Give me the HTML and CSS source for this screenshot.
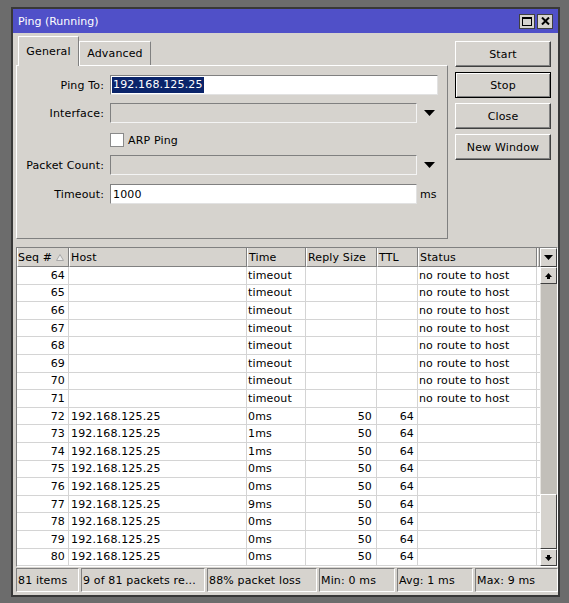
FILE: index.html
```html
<!DOCTYPE html>
<html lang="en">
<head>
<meta charset="UTF-8">
<title>Ping (Running)</title>
<link rel="stylesheet" href="styles.css">
</head>
<body>

<div class="window">
  <div class="titlebar">
    <span class="title">Ping (Running)</span>
    <div class="win-btns">
      <span class="win-btn">
        <svg width="10" height="9" viewBox="0 0 10 9"><rect x="0.5" y="0.5" width="9" height="8" fill="none" stroke="#000"/><rect x="0" y="0" width="10" height="2" fill="#000"/></svg>
      </span>
      <span class="win-btn">
        <svg width="9" height="8" viewBox="0 0 9 8"><path d="M1 0.5 L8 7.5 M8 0.5 L1 7.5" stroke="#000" stroke-width="2"/></svg>
      </span>
    </div>
  </div>

  <div class="window-body">
    <div class="top">
      <div class="tabs">
        <div class="tab-strip">
          <div class="tab active">General</div>
          <div class="tab">Advanced</div>
        </div>
        <div class="tab-panel">
          <div class="frow">
            <span class="flabel">Ping To:</span>
            <div class="field wide"><span class="sel">192.168.125.25</span></div>
          </div>
          <div class="frow">
            <span class="flabel">Interface:</span>
            <div class="field disabled"></div>
            <span class="drop"><svg width="11" height="6" viewBox="0 0 11 6"><path d="M0 0 H11 L5.5 6 Z" fill="#000"/></svg></span>
          </div>
          <div class="frow arp">
            <span class="check"></span>
            <span class="check-label">ARP Ping</span>
          </div>
          <div class="frow count">
            <span class="flabel">Packet Count:</span>
            <div class="field disabled"></div>
            <span class="drop"><svg width="11" height="6" viewBox="0 0 11 6"><path d="M0 0 H11 L5.5 6 Z" fill="#000"/></svg></span>
          </div>
          <div class="frow timeout">
            <span class="flabel">Timeout:</span>
            <div class="field">1000</div>
            <span class="unit">ms</span>
          </div>
        </div>
      </div>

      <div class="actions">
        <button class="btn">Start</button>
        <button class="btn default">Stop</button>
        <button class="btn">Close</button>
        <button class="btn">New Window</button>
      </div>
    </div>

    <div class="list">
      <div class="list-head">
        <div class="th c-seq">Seq # <svg class="sort" width="8" height="7" viewBox="0 0 8 7"><path d="M4 0.5 L7.5 6.5 H0.5 Z" fill="#ececec" stroke="#a8a8a8"/></svg></div>
        <div class="th c-host">Host</div>
        <div class="th c-time">Time</div>
        <div class="th c-size">Reply Size</div>
        <div class="th c-ttl">TTL</div>
        <div class="th c-status">Status</div>
        <div class="th c-gap"></div>
        <div class="head-menu"><svg width="9" height="5" viewBox="0 0 9 5"><path d="M0 0 H9 L4.5 5 Z" fill="#000"/></svg></div>
      </div>

      <div class="list-main">
        <div class="rows">
          <div class="row"><div class="td c-seq num">64</div><div class="td c-host"></div><div class="td c-time">timeout</div><div class="td c-size num"></div><div class="td c-ttl num"></div><div class="td c-status">no route to host</div><div class="td c-gap"></div></div>
          <div class="row"><div class="td c-seq num">65</div><div class="td c-host"></div><div class="td c-time">timeout</div><div class="td c-size num"></div><div class="td c-ttl num"></div><div class="td c-status">no route to host</div><div class="td c-gap"></div></div>
          <div class="row"><div class="td c-seq num">66</div><div class="td c-host"></div><div class="td c-time">timeout</div><div class="td c-size num"></div><div class="td c-ttl num"></div><div class="td c-status">no route to host</div><div class="td c-gap"></div></div>
          <div class="row"><div class="td c-seq num">67</div><div class="td c-host"></div><div class="td c-time">timeout</div><div class="td c-size num"></div><div class="td c-ttl num"></div><div class="td c-status">no route to host</div><div class="td c-gap"></div></div>
          <div class="row"><div class="td c-seq num">68</div><div class="td c-host"></div><div class="td c-time">timeout</div><div class="td c-size num"></div><div class="td c-ttl num"></div><div class="td c-status">no route to host</div><div class="td c-gap"></div></div>
          <div class="row"><div class="td c-seq num">69</div><div class="td c-host"></div><div class="td c-time">timeout</div><div class="td c-size num"></div><div class="td c-ttl num"></div><div class="td c-status">no route to host</div><div class="td c-gap"></div></div>
          <div class="row"><div class="td c-seq num">70</div><div class="td c-host"></div><div class="td c-time">timeout</div><div class="td c-size num"></div><div class="td c-ttl num"></div><div class="td c-status">no route to host</div><div class="td c-gap"></div></div>
          <div class="row"><div class="td c-seq num">71</div><div class="td c-host"></div><div class="td c-time">timeout</div><div class="td c-size num"></div><div class="td c-ttl num"></div><div class="td c-status">no route to host</div><div class="td c-gap"></div></div>
          <div class="row"><div class="td c-seq num">72</div><div class="td c-host">192.168.125.25</div><div class="td c-time">0ms</div><div class="td c-size num">50</div><div class="td c-ttl num">64</div><div class="td c-status"></div><div class="td c-gap"></div></div>
          <div class="row"><div class="td c-seq num">73</div><div class="td c-host">192.168.125.25</div><div class="td c-time">1ms</div><div class="td c-size num">50</div><div class="td c-ttl num">64</div><div class="td c-status"></div><div class="td c-gap"></div></div>
          <div class="row"><div class="td c-seq num">74</div><div class="td c-host">192.168.125.25</div><div class="td c-time">1ms</div><div class="td c-size num">50</div><div class="td c-ttl num">64</div><div class="td c-status"></div><div class="td c-gap"></div></div>
          <div class="row"><div class="td c-seq num">75</div><div class="td c-host">192.168.125.25</div><div class="td c-time">0ms</div><div class="td c-size num">50</div><div class="td c-ttl num">64</div><div class="td c-status"></div><div class="td c-gap"></div></div>
          <div class="row"><div class="td c-seq num">76</div><div class="td c-host">192.168.125.25</div><div class="td c-time">0ms</div><div class="td c-size num">50</div><div class="td c-ttl num">64</div><div class="td c-status"></div><div class="td c-gap"></div></div>
          <div class="row"><div class="td c-seq num">77</div><div class="td c-host">192.168.125.25</div><div class="td c-time">9ms</div><div class="td c-size num">50</div><div class="td c-ttl num">64</div><div class="td c-status"></div><div class="td c-gap"></div></div>
          <div class="row"><div class="td c-seq num">78</div><div class="td c-host">192.168.125.25</div><div class="td c-time">0ms</div><div class="td c-size num">50</div><div class="td c-ttl num">64</div><div class="td c-status"></div><div class="td c-gap"></div></div>
          <div class="row"><div class="td c-seq num">79</div><div class="td c-host">192.168.125.25</div><div class="td c-time">0ms</div><div class="td c-size num">50</div><div class="td c-ttl num">64</div><div class="td c-status"></div><div class="td c-gap"></div></div>
          <div class="row"><div class="td c-seq num">80</div><div class="td c-host">192.168.125.25</div><div class="td c-time">0ms</div><div class="td c-size num">50</div><div class="td c-ttl num">64</div><div class="td c-status"></div><div class="td c-gap"></div></div>
        </div>

        <div class="vscroll">
          <div class="sb-btn"><svg width="7" height="6" viewBox="0 0 7 6"><path d="M3.5 0 L7 4 H5 V6 H2 V4 H0 Z" fill="#000"/></svg></div>
          <div class="sb-track"><div class="sb-thumb"></div></div>
          <div class="sb-btn"><svg width="7" height="6" viewBox="0 0 7 6"><path d="M3.5 6 L7 2 H5 V0 H2 V2 H0 Z" fill="#000"/></svg></div>
        </div>
      </div>
    </div>

    <div class="statusbar">
      <div class="seg s1">81 items</div>
      <div class="seg s2">9 of 81 packets re...</div>
      <div class="seg s3">88% packet loss</div>
      <div class="seg s4">Min: 0 ms</div>
      <div class="seg s5">Avg: 1 ms</div>
      <div class="seg s6">Max: 9 ms</div>
    </div>
  </div>
</div>

</body>
</html>
```

FILE: styles.css
```css
* {
  margin: 0;
  padding: 0;
  box-sizing: border-box;
}

body {
  background: #6c6c6c;
  font-family: "DejaVu Sans", Verdana, sans-serif;
  font-size: 11px;
  letter-spacing: 0.15px;
  color: #000;
  padding: 7px 0 0 11px;
  height: 603px;
  overflow: hidden;
}

.window {
  width: 549px;
  border: 2px solid #383838;
  background: #d6d3ce;
}

/* title bar */
.titlebar {
  height: 24px;
  background: #5050c8;
  color: #fff;
  display: flex;
  align-items: center;
  justify-content: space-between;
  padding: 0 5px;
}

.title {
  letter-spacing: 0;
}

.win-btns {
  display: flex;
  gap: 2px;
}

.win-btn {
  width: 16px;
  height: 15px;
  background: #d6d3ce;
  border: 1px solid #404040;
  display: flex;
  align-items: center;
  justify-content: center;
}

.window-body {
  padding: 3px 0 3px 3px;
}

.top {
  display: flex;
  align-items: flex-start;
}

/* tabs */
.tabs {
  width: 432px;
}

.tab-strip {
  display: flex;
  align-items: flex-end;
  height: 29px;
  padding-left: 2px;
}

.tab {
  width: 72px;
  height: 24px;
  border: 1px solid;
  border-color: #fff #808080 transparent #fff;
  border-bottom: none;
  display: flex;
  align-items: center;
  justify-content: center;
}

.tab.active {
  width: 61px;
  height: 30px;
  margin-bottom: -1px;
  padding-bottom: 1px;
  background: #d6d3ce;
  position: relative;
  z-index: 1;
}

.tab-panel {
  height: 174px;
  border: 1px solid;
  border-color: #fff #808080 #808080 #fff;
  padding-top: 9px;
}

.frow {
  display: flex;
  align-items: center;
  height: 20px;
  margin-top: 8px;
}

.frow:first-child {
  margin-top: 0;
}

.frow.arp {
  margin-top: 7px;
}

.frow.count {
  margin-top: 5px;
}

.frow.timeout {
  margin-top: 9px;
}

.flabel {
  width: 87px;
  text-align: right;
  margin-right: 6px;
  white-space: nowrap;
}

.field {
  width: 307px;
  height: 20px;
  background: #fff;
  border: 1px solid;
  border-color: #808080 #e2e2e2 #e2e2e2 #808080;
  padding-left: 2px;
  display: flex;
  align-items: center;
}

.field.wide {
  width: 328px;
}

.field.disabled {
  background: #d6d3ce;
  border-color: #808080 #f4f4f4 #f4f4f4 #808080;
}

.sel {
  background: #0a246a;
  color: #fff;
  line-height: 16px;
  padding: 0 1px;
  margin-left: -1px;
}

.drop {
  width: 21px;
  display: flex;
  justify-content: center;
  padding-left: 4px;
}

.unit {
  margin-left: 3px;
}

.check {
  width: 14px;
  height: 14px;
  margin-left: 93px;
  background: #fff;
  border: 1px solid #8a8a8a;
}

.check-label {
  margin-left: 4px;
}

/* buttons */
.actions {
  width: 96px;
  margin: 5px 0 0 7px;
  display: flex;
  flex-direction: column;
  gap: 5px;
}

.btn {
  height: 26px;
  font: inherit;
  letter-spacing: inherit;
  color: #000;
  background: #d6d3ce;
  border: 1px solid;
  border-color: #fff #404040 #404040 #fff;
  box-shadow: inset -1px -1px #808080;
}

.btn.default {
  border-color: #000;
  box-shadow: inset 1px 1px #fff, inset -1px -1px #808080;
}

/* list */
.list {
  margin-top: 8px;
  width: 542px;
  border: 1px solid;
  border-color: #808080 #fff #fff #808080;
  background: #fff;
}

.list-head {
  display: flex;
  height: 19px;
  background: #d6d3ce;
}

.th {
  height: 19px;
  border-left: 1px solid #fff;
  border-right: 1px solid #808080;
  border-bottom: 1px solid #808080;
  padding-left: 1px;
  display: flex;
  align-items: center;
  white-space: nowrap;
  overflow: hidden;
}

.th.c-seq {
  padding-left: 0;
}

.sort {
  margin-left: 4px;
}

.head-menu {
  width: 17px;
  height: 19px;
  border: 1px solid;
  border-color: #fff #404040 #404040 #fff;
  display: flex;
  align-items: center;
  justify-content: center;
}

.c-seq { width: 52px; }
.c-host { width: 178px; }
.c-time { width: 59px; }
.c-size { width: 71px; }
.c-ttl { width: 41px; }
.c-status { width: 119px; }
.c-gap { width: 3px; }

.list-main {
  display: flex;
}

.rows {
  width: 523px;
}

.row {
  display: flex;
  height: 17.6px;
}

.td {
  height: 17.6px;
  border-right: 1px solid #d4d4d4;
  border-bottom: 1px solid #d4d4d4;
  padding: 0 1px;
  display: flex;
  align-items: center;
  white-space: nowrap;
  overflow: hidden;
}

.td.num {
  justify-content: flex-end;
}

.td.c-seq {
  padding-right: 3px;
}

.td.c-host {
  padding-left: 2px;
}

.td.c-size {
  padding-right: 4px;
}

.td.c-ttl {
  padding-right: 3px;
}

.td.c-gap {
  border-right: none;
}

/* scrollbar */
.vscroll {
  width: 17px;
  display: flex;
  flex-direction: column;
  background: #c2bfb9;
}

.sb-btn {
  height: 17px;
  background: #d6d3ce;
  border: 1px solid;
  border-color: #fff #404040 #404040 #fff;
  display: flex;
  align-items: center;
  justify-content: center;
}

.sb-track {
  flex: 1;
  display: flex;
  flex-direction: column;
  justify-content: flex-end;
  border-left: 1px solid #e6e4e0;
}

.sb-thumb {
  height: 55px;
  background: #d6d3ce;
  border: 1px solid;
  border-color: #fff #404040 #404040 #fff;
  margin-left: -1px;
}

/* status bar */
.statusbar {
  margin-top: 1px;
  height: 24px;
  display: flex;
  gap: 2px;
}

.seg {
  border: 1px solid;
  border-color: #808080 #fff #fff #808080;
  padding-left: 1px;
  display: flex;
  align-items: center;
  white-space: nowrap;
  overflow: hidden;
}

.s1 { width: 63px; }
.s2 { width: 124px; }
.s3 { width: 110px; }
.s4 { width: 76px; }
.s5 { width: 76px; }
.s6 { flex: 1; }
```
